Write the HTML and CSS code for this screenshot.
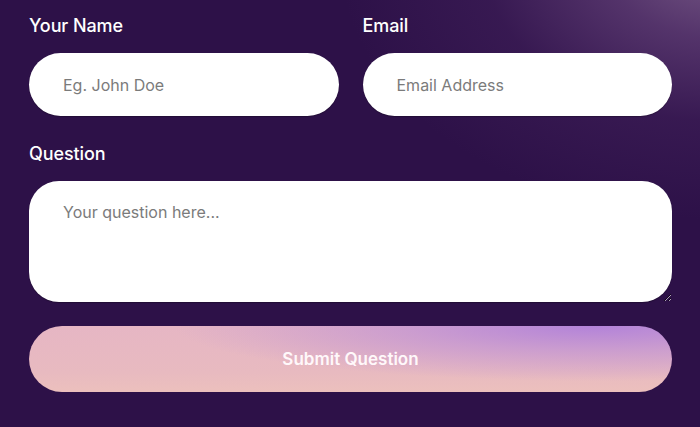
FILE: index.html
```html
<!DOCTYPE html>
<html lang="en">
<head>
<meta charset="utf-8">
<title>Ask a Question</title>
<link rel="stylesheet" href="styles.css">
</head>
<body>
<form class="form">
  <div class="row">
    <div class="field">
      <label class="label" for="name">Your Name</label>
      <input class="input" id="name" type="text" placeholder="Eg. John Doe">
    </div>
    <div class="field">
      <label class="label" for="email">Email</label>
      <input class="input" id="email" type="email" placeholder="Email Address">
    </div>
  </div>
  <div class="field field-q">
    <label class="label" for="q">Question</label>
    <textarea class="textarea" id="q" placeholder="Your question here..."></textarea>
  </div>
  <button class="submit" type="button">Submit Question</button>
</form>
</body>
</html>
```
FILE: styles.css
```css
html, body {
  margin: 0;
  height: 100%;
}
body {
  background:
    radial-gradient(ellipse 380px 260px at 720px -40px, rgba(128, 98, 142, 0.9) 0%, rgba(105, 70, 125, 0.65) 30%, rgba(75, 40, 100, 0.35) 62%, rgba(45, 17, 72, 0) 100%),
    #2d1148;
  font-family: Inter, "Noto Sans", sans-serif;
  overflow: hidden;
}
.form {
  display: flex;
  flex-direction: column;
  padding: 14px 28px 0 29px;
}
.row {
  display: grid;
  grid-template-columns: minmax(0, 1fr) minmax(0, 1fr);
  column-gap: 24px;
}
.field {
  display: flex;
  flex-direction: column;
  gap: 15px;
  min-width: 0;
}
.field-q {
  margin-top: 26px;
  gap: 15px;
}
.label {
  color: #ffffff;
  font-size: 18px;
  font-weight: 500;
  line-height: 24px;
  letter-spacing: -0.1px;
}
.input, .textarea {
  box-sizing: border-box;
  width: 100%;
  min-width: 0;
  border: none;
  background: #ffffff;
  font-family: inherit;
  font-size: 16px;
  color: #333;
  outline: none;
  box-shadow: 0 1px 1px rgba(0, 0, 0, 0.25);
}
.input {
  height: 63px;
  border-radius: 32px;
  padding: 0 34px;
}
.textarea {
  height: 121px;
  border-radius: 30px;
  padding: 20px 34px;
  resize: vertical;
  display: block;
  line-height: 22px;
}
::placeholder {
  color: #7b7b7b;
  opacity: 1;
}
.submit {
  margin-top: 24px;
  height: 66px;
  border: none;
  border-radius: 33px;
  font-family: inherit;
  font-size: 17px;
  font-weight: 600;
  color: #fff8fa;
  background:
    radial-gradient(ellipse 420px 55px at 88% 0%, rgba(176, 128, 218, 0.95) 0%, rgba(192, 146, 212, 0.7) 45%, rgba(225, 180, 200, 0) 100%),
    linear-gradient(180deg, #e6b6c4 0%, #e8bac0 70%, #ecc0bd 100%);
}
```
